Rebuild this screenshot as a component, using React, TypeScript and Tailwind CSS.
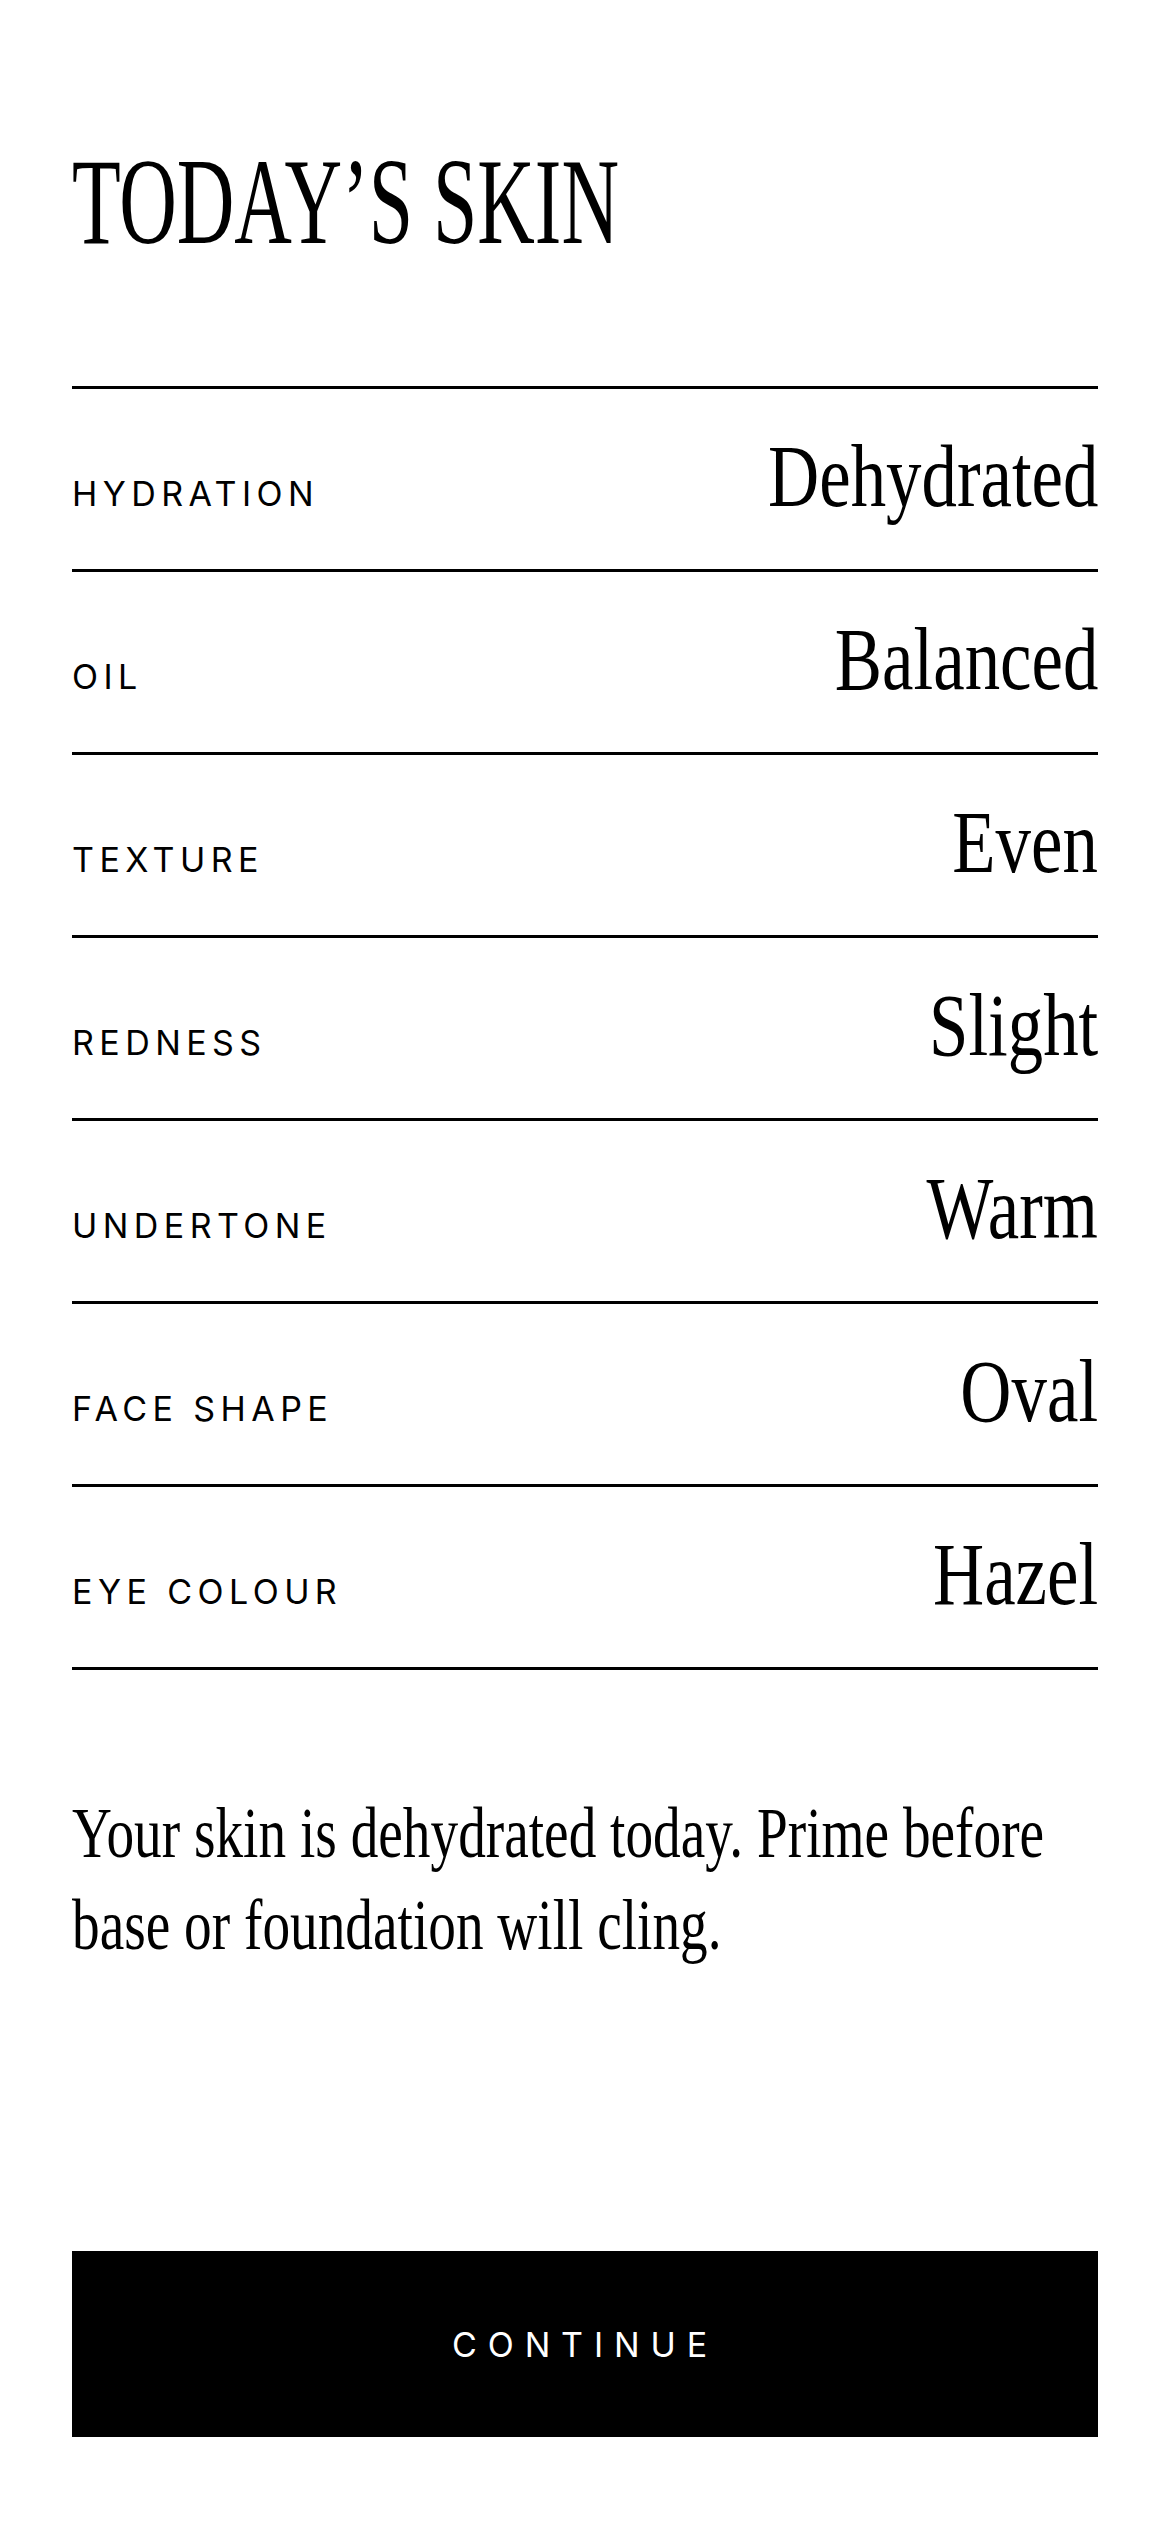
import React from "react";

const rows: [string, string][] = [
  ["HYDRATION", "Dehydrated"],
  ["OIL", "Balanced"],
  ["TEXTURE", "Even"],
  ["REDNESS", "Slight"],
  ["UNDERTONE", "Warm"],
  ["FACE SHAPE", "Oval"],
  ["EYE COLOUR", "Hazel"],
];

export default function App() {
  return (
    <div className="w-[1170px] min-h-[2532px] bg-white text-black px-[72px] pt-[140px] pb-[96px] flex flex-col">
      <h1 className="font-['Liberation_Serif',serif] font-normal text-[123px] leading-none whitespace-nowrap">
        <span className="inline-block origin-left [transform:scaleX(0.648)]">TODAY’S SKIN</span>
      </h1>

      <div className="mt-[123px] border-b-[3px] border-black">
        {rows.map(([label, value]) => (
          <div
            key={label}
            className="h-[183px] border-t-[3px] border-black pt-[44px] flex justify-between items-baseline"
          >
            <span className="font-['Inter',sans-serif] text-[34px] leading-none tracking-[0.16em] whitespace-nowrap">
              {label}
            </span>
            <span className="font-['Liberation_Serif',serif] text-[88px] leading-none inline-block origin-right [transform:scaleX(0.805)] whitespace-nowrap">
              {value}
            </span>
          </div>
        ))}
      </div>

      <p className="mt-[117px] font-['Liberation_Serif',serif] text-[72px] leading-[92px] whitespace-nowrap">
        <span className="block origin-left [transform:scaleX(0.768)]">Your skin is dehydrated today. Prime before</span>
        <span className="block origin-left [transform:scaleX(0.768)]">base or foundation will cling.</span>
      </p>

      <button className="mt-[280px] h-[186px] w-full bg-black text-white flex items-center justify-center font-['Inter',sans-serif] text-[34px] tracking-[0.32em]">
        CONTINUE
      </button>
    </div>
  );
}
